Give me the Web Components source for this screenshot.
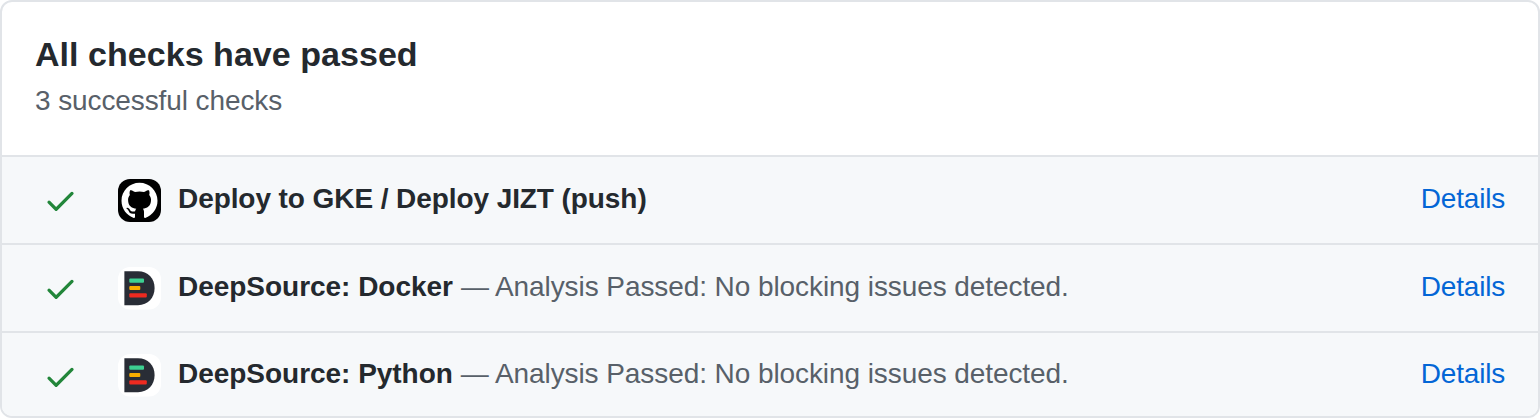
<!DOCTYPE html>
<html lang="en">
<head>
<meta charset="utf-8">
<title>Checks</title>
<style>
html, body { margin: 0; background: #fff; }
body { font-family: "Liberation Sans", Arial, sans-serif; font-size: 28px; color: #24292e; }
</style>
</head>
<body>
<checks-panel>
  <span slot="title">All checks have passed</span>
  <span slot="summary">3 successful checks</span>
  <check-row><github-avatar slot="avatar"></github-avatar><span slot="name">Deploy to GKE / Deploy JIZT (push)</span></check-row>
  <check-row><deepsource-avatar slot="avatar"></deepsource-avatar><span slot="name">DeepSource: Docker</span><span slot="description">— Analysis Passed: No blocking issues detected.</span></check-row>
  <check-row class="last"><deepsource-avatar slot="avatar"></deepsource-avatar><span slot="name">DeepSource: Python</span><span slot="description">— Analysis Passed: No blocking issues detected.</span></check-row>
</checks-panel>
<script>
const define = (name, html) => customElements.define(name, class extends HTMLElement {
  constructor() {
    super();
    this.attachShadow({ mode: "open" }).innerHTML = html;
  }
});

define("checks-panel", `
<style>
:host { display: flex; flex-direction: column; box-sizing: border-box; width: 1540px; height: 418px; border: 2px solid #e1e4e8; border-radius: 12px; overflow: hidden; background: #fff; }
header { box-sizing: border-box; height: 153px; padding: 32px 33px 0; }
h3 { margin: 0; font-size: 34px; line-height: 40px; font-weight: 700; letter-spacing: 0.04px; white-space: nowrap; }
p { margin: 8px 0 0; line-height: 38px; color: #586069; letter-spacing: -0.1px; white-space: nowrap; }
</style>
<header><h3><slot name="title"></slot></h3><p><slot name="summary"></slot></p></header>
<slot></slot>`);

define("check-row", `
<style>
:host { display: flex; align-items: flex-start; box-sizing: border-box; height: 88px; border-top: 2px solid #e1e4e8; background: #f6f8fa; padding: 22px 33px 0 40.5px; line-height: 40px; white-space: nowrap; }
:host(.last) { flex: 1; --row-shift: -1px; }
svg { flex: none; width: 35px; height: 35px; margin: 3.5px 40.5px 0 0; fill: #22863a; }
.avatar { margin-top: var(--row-shift, 0px); }
.text { flex: 1; display: flex; gap: 8px; margin: var(--row-shift, 0px) 0 0 17px; }
.name { font-weight: 700; letter-spacing: -0.08px; }
:host(:not(:first-of-type)) .name { letter-spacing: -0.03px; }
.description { color: #586069; letter-spacing: -0.08px; }
a { margin-top: var(--row-shift, 0px); color: #0366d6; text-decoration: none; letter-spacing: -0.2px; }
</style>
<svg viewBox="0 0 16 16"><path d="M13.78 4.22a.75.75 0 010 1.06l-7.25 7.25a.75.75 0 01-1.06 0L2.22 9.28a.75.75 0 011.06-1.06L6 10.94l6.72-6.72a.75.75 0 011.06 0z"/></svg>
<div class="avatar"><slot name="avatar"></slot></div>
<div class="text"><span class="name"><slot name="name"></slot></span><span class="description"><slot name="description"></slot></span></div>
<a href="#">Details</a>`);

define("github-avatar", `
<style>
:host { display: block; flex: none; width: 43px; height: 43px; }
svg { display: block; }
</style>
<svg width="43" height="43" viewBox="0 0 43 43"><rect width="43" height="43" rx="12"/><path transform="translate(3.5 3.8) scale(2.25)" fill="#fff" d="M8 0C3.58 0 0 3.58 0 8c0 3.54 2.29 6.53 5.47 7.59.4.07.55-.17.55-.38 0-.19-.01-.82-.01-1.49-2.01.37-2.53-.49-2.69-.94-.09-.23-.48-.94-.82-1.13-.28-.15-.68-.52-.01-.53.63-.01 1.08.58 1.23.82.72 1.21 1.87.87 2.33.66.07-.52.28-.87.51-1.07-1.78-.2-3.64-.89-3.64-3.95 0-.87.31-1.59.82-2.15-.08-.2-.36-1.02.08-2.12 0 0 .67-.21 2.2.82.64-.18 1.32-.27 2-.27s1.36.09 2 .27c1.53-1.04 2.2-.82 2.2-.82.44 1.1.16 1.92.08 2.12.51.56.82 1.27.82 2.15 0 3.07-1.87 3.75-3.65 3.95.29.25.54.73.54 1.48 0 1.07-.01 1.93-.01 2.2 0 .21.15.46.55.38A8.01 8.01 0 0016 8c0-4.42-3.58-8-8-8z"/></svg>`);

define("deepsource-avatar", `
<style>
:host { display: block; flex: none; width: 43px; height: 43px; }
svg { display: block; }
</style>
<svg width="43" height="43" viewBox="0 0 43 43"><rect width="43" height="42.5" rx="12" fill="#fff"/><path fill="#292d36" d="M6.4 4.2H20C30 4.2 36.6 11.3 36.6 21.1S30 38.2 20 38.2H6.4z"/><rect x="11.3" y="11.6" width="14.7" height="4.1" rx="1" fill="#3dd091"/><rect x="11.3" y="19" width="11" height="4" rx="1" fill="#f8ae00"/><rect x="11.3" y="26.3" width="17.5" height="4.2" rx="1" fill="#ee2a20"/></svg>`);
</script>
</body>
</html>
